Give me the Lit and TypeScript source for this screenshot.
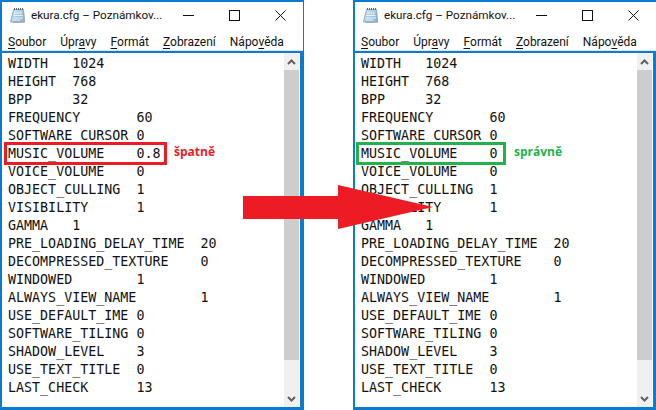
import { LitElement, html, css } from "lit";
import { customElement, property } from "lit/decorators.js";

const LINES = (v: string) => [
  "WIDTH\t1024", "HEIGHT\t768", "BPP\t32", "FREQUENCY\t60", "SOFTWARE_CURSOR\t0",
  `MUSIC_VOLUME\t${v}`, "VOICE_VOLUME\t0", "OBJECT_CULLING\t1", "VISIBILITY\t1", "GAMMA\t1",
  "PRE_LOADING_DELAY_TIME\t20", "DECOMPRESSED_TEXTURE\t0", "WINDOWED\t1", "ALWAYS_VIEW_NAME\t1",
  "USE_DEFAULT_IME\t0", "SOFTWARE_TILING\t0", "SHADOW_LEVEL\t3", "USE_TEXT_TITLE\t0", "LAST_CHECK\t13",
];

@customElement("note-window")
class NoteWindow extends LitElement {
  @property() value = "0";
  @property() label = "";
  @property() tone = "bad";

  static styles = css`
    :host { display: block; flex: none; }
    .win { box-sizing: border-box; height: 410px; border: 2px solid #0a7bd0; border-right-width: 1px; border-bottom-width: 3px; background: #fff; display: flex; flex-direction: column; font-family: Roboto, "Noto Sans", sans-serif; color: #111; }
    .title { height: 28px; box-sizing: border-box; display: flex; align-items: center; padding: 0 0 2px 8px; font-size: 11.7px; flex: none; }
    .title svg.doc { margin-right: 5px; flex: none; }
    .title .name { flex: 1; min-width: 0; white-space: nowrap; }
    .ctl { width: 46px; height: 26px; display: flex; align-items: center; justify-content: center; flex: none; }
    .menu { height: 20px; display: flex; align-items: center; padding-left: 6px; gap: 14px; font-size: 12px; flex: none; padding-top: 4px; box-sizing: border-box; }
    .menu u { text-decoration-thickness: 1px; text-underline-offset: 2px; }
    .body { flex: 1; display: flex; border-top: 2px solid #0a7bd0; border-right: 3px solid #0a7bd0; margin-top: 1px; min-height: 0; box-shadow: 0 -1px 0 #e6e6e6; }
    .text { flex: 1; position: relative; padding: 2px 0 0 6px; font: 13.33px/18px "DejaVu Sans Mono", monospace; color: #111; }
    .ln { white-space: pre; tab-size: 8; width: fit-content; }
    .sb { width: 15px; background: #f0f0f0; display: flex; flex-direction: column; flex: none; }
    .arr { height: 17px; display: flex; align-items: center; justify-content: center; flex: none; }
    .thumb { height: 290px; background: #cdcdcd; flex: none; }
    .spacer { flex: 1; }
    .gap { width: 1px; flex: none; }
    .box { position: absolute; left: 2px; top: 89px; border: 3px solid; box-sizing: border-box; height: 23px; }
    .bad .box { border-color: #ed1c24; width: 163px; }
    .good .box { border-color: #22b14c; left: 1px; width: 150px; }
    .tag { position: absolute; top: 90px; font: bold 12px "Open Sans", sans-serif; }
    .bad .tag { left: 172px; color: #ed1c24; }
    .good .tag { left: 159px; color: #22b14c; }
  `;

  render() {
    return html`<div class="win">
      <div class="title">
        <svg class="doc" width="16" height="17" viewBox="0 0 16 17">
          <defs><linearGradient id="g" x1="0" y1="0" x2="1" y2="1"><stop offset="0" stop-color="#d2e6f2"/><stop offset="1" stop-color="#7fb2d2"/></linearGradient></defs>
          <path d="M14 4 L15 15.5 L3 16 L3 15 Z" fill="#a89878"/>
          <path d="M3.5 2.5 L13.5 2.5 L14 15 L.5 15 Z" fill="url(#g)" stroke="#8fb0c6"/>
          <path d="M4 6h8M3.5 8.5h9M3 11h10M2.5 13h8" stroke="#e8f2f8"/>
          <path d="M4.5 1v2M6.5 1v2M8.5 1v2M10.5 1v2M12.5 1v2" stroke="#55656f"/>
        </svg>
        <span class="name">ekura.cfg – Poznámkov...</span>
        <span class="ctl"><svg width="11" height="11" viewBox="0 0 11 11"><path d="M0 5.5h11" stroke="#111"/></svg></span>
        <span class="ctl"><svg width="11" height="11" viewBox="0 0 11 11"><rect x=".5" y=".5" width="10" height="10" fill="none" stroke="#111"/></svg></span>
        <span class="ctl"><svg width="11" height="11" viewBox="0 0 11 11"><path d="M.5 .5l10 10M10.5 .5l-10 10" stroke="#111"/></svg></span>
      </div>
      <div class="menu">
        <span><u>S</u>oubor</span><span>Úpr<u>a</u>vy</span><span><u>F</u>ormát</span><span><u>Z</u>obrazení</span><span>Nápo<u>v</u>ěda</span>
      </div>
      <div class="body">
        <div class="text ${this.tone}">
          ${LINES(this.value).map((l) => html`<div class="ln">${l}</div>`)}
          <div class="box"></div><div class="tag">${this.label}</div>
        </div>
        <div class="sb">
          <div class="arr"><svg width="9" height="6" viewBox="0 0 9 6"><path d="M1 5l3.5-3.5L8 5" fill="none" stroke="#606060" stroke-width="2"/></svg></div>
          <div class="thumb"></div>
          <div class="spacer"></div>
          <div class="arr"><svg width="9" height="6" viewBox="0 0 9 6"><path d="M1 1l3.5 3.5L8 1" fill="none" stroke="#606060" stroke-width="2"/></svg></div>
        </div>
        <div class="gap"></div>
      </div>
    </div>`;
  }
}

@customElement("app-root")
class AppRoot extends LitElement {
  static styles = css`
    :host { display: block; width: 656px; height: 410px; background: #fff; position: relative; overflow: hidden; }
    .row { display: flex; gap: 49px; }
    .left { width: 304px; }
    .right { width: 304px; }
    .arrow { position: absolute; left: 243px; top: 185px; }
  `;
  render() {
    return html`<div class="row">
      <note-window class="left" value="0.8" label="špatně" tone="bad"></note-window>
      <note-window class="right" value="0" label="správně" tone="good"></note-window>
    </div>
    <svg class="arrow" width="190" height="44" viewBox="0 0 190 44"><path d="M0 11H95V0L190 22 95 44V34H0Z" fill="#ed1c24"/></svg>`;
  }
}
